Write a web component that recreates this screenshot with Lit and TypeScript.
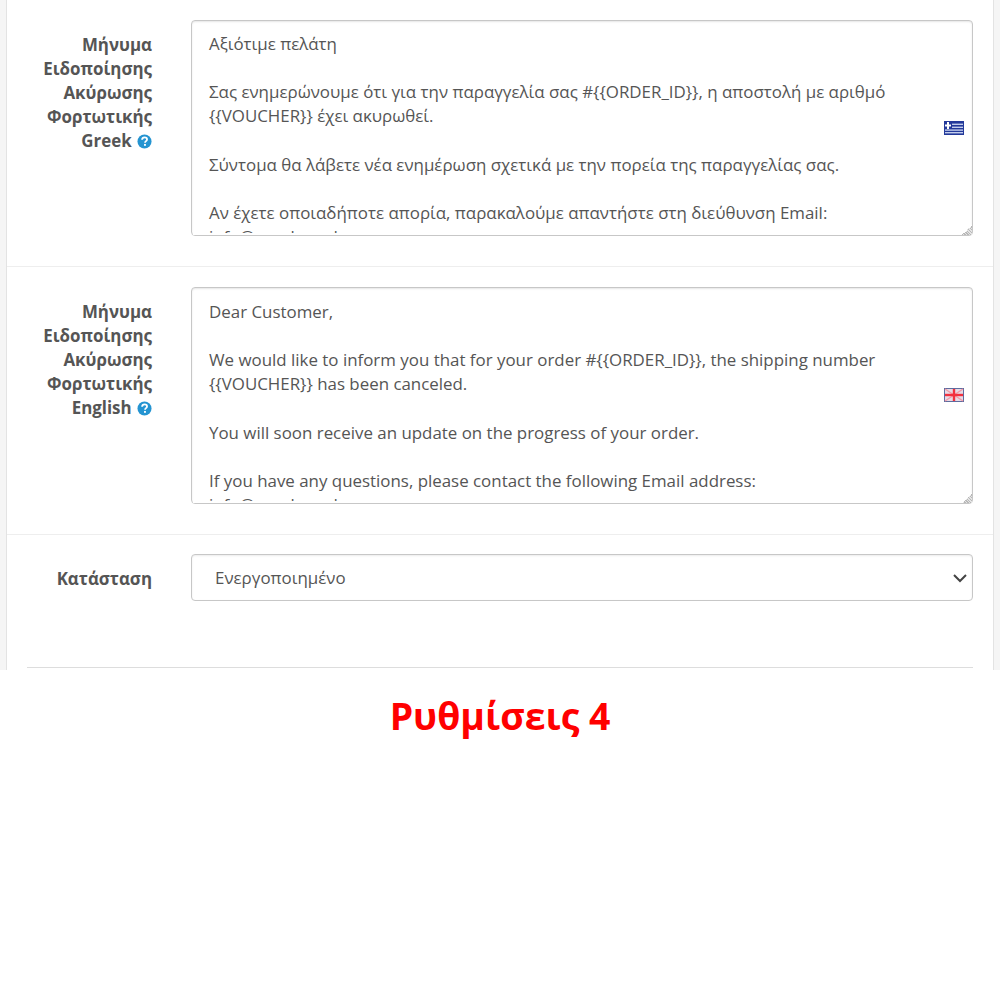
import { LitElement, html, css } from "lit";
import { customElement } from "lit/decorators.js";

const help = html`<svg class="help" viewBox="0 0 16 16" width="15" height="15" aria-hidden="true">
  <circle cx="8" cy="8" r="7.5" fill="#2494d1"></circle>
  <path d="M5.4 6.2c.1-1.6 1.2-2.5 2.7-2.5s2.6.9 2.6 2.1c0 1.9-2.1 1.8-2.1 3.5" fill="none" stroke="#fff" stroke-width="1.9"></path>
  <rect x="7.5" y="10.6" width="2" height="2" fill="#fff"></rect>
</svg>`;

const greek = html`<svg class="flag" viewBox="0 0 20 14" width="20" height="14" aria-hidden="true">
  <rect width="20" height="14" fill="#23399a"></rect>
  <g fill="#c3cdec">
    <rect x="8" y="2.6" width="11" height="1.4"></rect>
    <rect x="8" y="5.6" width="11" height="1.4"></rect>
    <rect x="1" y="8.4" width="18" height="1.4"></rect>
    <rect x="1" y="11" width="18" height="1.4"></rect>
    <rect x="3" y="1" width="2" height="7" fill="#fff"></rect>
    <rect x="1" y="3.5" width="6" height="2" fill="#fff"></rect>
  </g>
</svg>`;

const uk = html`<svg class="flag" viewBox="0 0 20 14" width="20" height="14" aria-hidden="true">
  <rect width="20" height="14" fill="#5f6c9f"></rect>
  <rect x="1" y="1" width="18" height="12" fill="#e6dbe6"></rect>
  <path d="M1 1 19 13M19 1 1 13" stroke="#f29aa8" stroke-width="1.4"></path>
  <rect x="8.8" y="1" width="2.4" height="12" fill="#f2303f"></rect>
  <rect x="1" y="5.8" width="18" height="2.4" fill="#f2303f"></rect>
</svg>`;

@customElement("app-root")
export class AppRoot extends LitElement {
  static styles = css`
    :host {
      display: block;
      width: 1000px;
      font-family: "Open Sans", "Noto Sans", sans-serif;
      color: #555;
      font-size: 16.9px;
      line-height: 24.15px;
      background: #fff;
      min-height: 1000px;
    }
    .shell {
      height: 670px;
      overflow: hidden;
      box-sizing: border-box;
      padding: 0 6px;
      background: #f5f5f5;
    }
    .card {
      height: 670px;
      box-sizing: border-box;
      background: #fff;
      border-left: 1px solid #e3e3e3;
      border-right: 1px solid #e3e3e3;
    }
    .row {
      display: grid;
      grid-template-columns: 145px 782px;
      column-gap: 39px;
      padding: 20px 20px 30px 0;
      border-bottom: 1px solid #eee;
      box-sizing: border-box;
    }
    .row.first {
      height: 267px;
    }
    .row.second {
      height: 268px;
    }
    .row.last {
      border-bottom: 0;
      padding: 19px 20px 0 0;
    }
    .label {
      box-sizing: border-box;
      padding-top: 12.6px;
      padding-left: 20px;
      text-align: right;
      font-weight: 700;
    }
    .label.single {
      white-space: nowrap;
      padding-left: 0;
      padding-top: 13px;
    }
    .help {
      vertical-align: -2px;
      margin-left: 1px;
    }
    .field {
      position: relative;
    }
    .clip::after {
      content: "";
      position: absolute;
      left: 2px;
      right: 16px;
      bottom: 1px;
      height: 2px;
      background: #fff;
    }
    textarea {
      display: block;
      box-sizing: border-box;
      width: 782px;
      height: 217px;
      margin: 0;
      padding: 12px 70px 0 17px;
      border: 1px solid #c7c7c7;
      border-radius: 4px;
      box-shadow: inset 0 1px 2px rgba(0, 0, 0, 0.1);
      background: #fff;
      color: #555;
      font: inherit;
      line-height: 24.15px;
      overflow: auto;
      scrollbar-width: none;
      resize: vertical;
      outline: none;
    }
    .row.first textarea {
      height: 216px;
      padding-top: 11px;
    }
    textarea::-webkit-resizer {
      background:
        linear-gradient(135deg, #fff 50%, transparent 50%) right bottom / 10px 10px no-repeat,
        repeating-linear-gradient(45deg, #b8b8b8 0 1px, #e4e4e4 1px 2px) right bottom / 10px 10px no-repeat;
    }
    .flag {
      position: absolute;
      right: 9px;
      top: 101px;
      filter: blur(0.35px);
    }
    select {
      display: block;
      box-sizing: border-box;
      width: 782px;
      height: 47px;
      margin: 0;
      padding: 1px 40px 0 23px;
      border: 1px solid #c7c7c7;
      border-radius: 4px;
      box-shadow: inset 0 1px 2px rgba(0, 0, 0, 0.08);
      background: #fff;
      color: #555;
      font: inherit;
      appearance: none;
      outline: none;
    }
    .chev {
      position: absolute;
      right: 5px;
      top: 19px;
      pointer-events: none;
    }
    .rule {
      height: 1px;
      margin: 66px 20px 0 20px;
      background: #ddd;
    }
    h2 {
      margin: 24px 0 0;
      text-align: center;
      color: #f00;
      font-size: 37.4px;
      line-height: 44px;
      font-weight: 700;
    }
  `;

  render() {
    return html`
      <div class="shell">
        <div class="card">
          <div class="row first">
            <div class="label">Μήνυμα Ειδοποίησης Ακύρωσης Φορτωτικής Greek ${help}</div>
            <div class="field clip">
              <textarea>Αξιότιμε πελάτη

Σας ενημερώνουμε ότι για την παραγγελία σας #{{ORDER_ID}}, η αποστολή με αριθμό
{{VOUCHER}} έχει ακυρωθεί.

Σύντομα θα λάβετε νέα ενημέρωση σχετικά με την πορεία της παραγγελίας σας.

Αν έχετε οποιαδήποτε απορία, παρακαλούμε απαντήστε στη διεύθυνση Email:
info@yourbrand.gr</textarea>
              ${greek}
            </div>
          </div>
          <div class="row second">
            <div class="label">Μήνυμα Ειδοποίησης Ακύρωσης Φορτωτικής English ${help}</div>
            <div class="field clip">
              <textarea>Dear Customer,

We would like to inform you that for your order #{{ORDER_ID}}, the shipping number
{{VOUCHER}} has been canceled.

You will soon receive an update on the progress of your order.

If you have any questions, please contact the following Email address:
info@yourbrand.gr</textarea>
              ${uk}
            </div>
          </div>
          <div class="row last">
            <div class="label single">Κατάσταση</div>
            <div class="field">
              <select>
                <option>Ενεργοποιημένο</option>
                <option>Απενεργοποιημένο</option>
              </select>
              <svg class="chev" viewBox="0 0 16 10" width="16" height="10" aria-hidden="true">
                <path d="M2 2l6 6 6-6" fill="none" stroke="#444" stroke-width="2"></path>
              </svg>
            </div>
          </div>
          <div class="rule"></div>
        </div>
      </div>
      <h2>Ρυθμίσεις 4</h2>
    `;
  }
}
